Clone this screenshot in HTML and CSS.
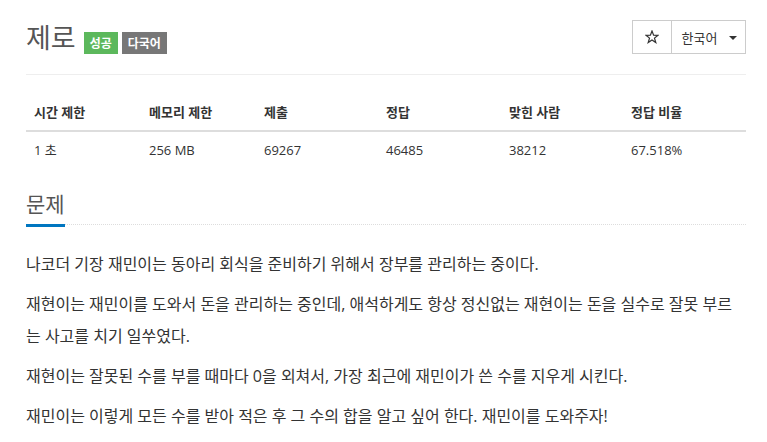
FILE: index.html
```html
<!DOCTYPE html>
<html lang="ko">
<head>
<meta charset="utf-8">
<title>제로</title>
<link rel="stylesheet" href="styles.css">
</head>
<body>
<div class="container">
  <div class="page-header">
    <h1 class="title">
      <span class="title-text">제로</span>
      <span class="label label-success">성공</span>
      <span class="label label-default">다국어</span>
    </h1>
    <div class="btn-group">
      <span class="btn btn-star"><svg width="14" height="14" viewBox="0 0 14 14"><polygon points="7,1 8.6,5.2 13,5.3 9.5,8.1 10.8,12.5 7,9.9 3.2,12.5 4.5,8.1 1,5.3 5.4,5.2" fill="none" stroke="#333" stroke-width="1.2" stroke-linejoin="miter"/></svg></span>
      <span class="btn btn-lang">한국어 <span class="caret"></span></span>
    </div>
  </div>

  <div class="info-table">
    <div class="cell head">시간 제한</div>
    <div class="cell head">메모리 제한</div>
    <div class="cell head">제출</div>
    <div class="cell head">정답</div>
    <div class="cell head">맞힌 사람</div>
    <div class="cell head">정답 비율</div>
    <div class="cell">1 초</div>
    <div class="cell">256 MB</div>
    <div class="cell">69267</div>
    <div class="cell">46485</div>
    <div class="cell">38212</div>
    <div class="cell">67.518%</div>
  </div>

  <section class="problem">
    <div class="headline">
      <h2>문제</h2>
    </div>
    <div class="problem-text">
      <p>나코더 기장 재민이는 동아리 회식을 준비하기 위해서 장부를 관리하는 중이다.</p>
      <p>재현이는 재민이를 도와서 돈을 관리하는 중인데, 애석하게도 항상 정신없는 재현이는 돈을 실수로 잘못 부르는 사고를 치기 일쑤였다.</p>
      <p>재현이는 잘못된 수를 부를 때마다 0을 외쳐서, 가장 최근에 재민이가 쓴 수를 지우게 시킨다.</p>
      <p>재민이는 이렇게 모든 수를 받아 적은 후 그 수의 합을 알고 싶어 한다. 재민이를 도와주자!</p>
    </div>
  </section>
</div>
</body>
</html>
```

FILE: styles.css
```css
html, body {
  margin: 0;
  padding: 0;
  background: #fff;
}

body {
  font-family: "Open Sans", "Noto Sans CJK KR", sans-serif;
  color: #333;
  font-size: 13px;
}

.container {
  width: 720px;
  padding-left: 26px;
}

.page-header {
  display: flex;
  justify-content: space-between;
  align-items: flex-start;
  padding-top: 20px;
  padding-bottom: 20px;
  border-bottom: 1px solid #eee;
}

.title {
  margin: 0;
  display: flex;
  align-items: center;
  height: 34px;
  font-weight: normal;
}

.title-text {
  font-size: 27px;
  line-height: 34px;
  color: #555;
  font-family: "Noto Sans CJK KR", sans-serif;
}

.label {
  display: inline-block;
  margin-top: 12px;
  height: 22px;
  line-height: 22px;
  padding: 0 6px;
  color: #fff;
  font-size: 12px;
  font-weight: bold;
  font-family: "Noto Sans CJK KR", sans-serif;
}

.label-success {
  background: #5cb85c;
  margin-left: 8px;
}

.label-default {
  background: #777;
  margin-left: 4px;
}

.btn-group {
  display: flex;
  height: 34px;
}

.btn {
  box-sizing: border-box;
  height: 34px;
  border: 1px solid #ccc;
  background: #fff;
  display: flex;
  align-items: center;
  justify-content: center;
  color: #333;
}

.btn-star {
  width: 40px;
}

.btn-lang {
  width: 75px;
  margin-left: -1px;
  font-size: 13px;
  font-family: "Noto Sans CJK KR", sans-serif;
  gap: 12px;
  padding-left: 2px;
}

.caret {
  display: inline-block;
  width: 0;
  height: 0;
  border-top: 4px solid #333;
  border-left: 4px solid transparent;
  border-right: 4px solid transparent;
  margin-top: 2px;
}

.info-table {
  display: grid;
  grid-template-columns: 115px 115px 122px 123px 122px 123px;
  margin-top: 19px;
}

.cell {
  padding: 8px;
  line-height: 20px;
  font-size: 13px;
}

.cell.head {
  font-weight: bold;
  font-size: 13px;
  border-bottom: 2px solid #ddd;
}

.problem {
  margin-top: 18px;
}

.headline {
  border-bottom: 1px dotted #ddd;
}

.headline h2 {
  display: inline-block;
  margin: 0 0 -3px 0;
  padding-bottom: 4px;
  font-size: 21px;
  line-height: 34px;
  font-weight: normal;
  color: #555;
  border-bottom: 3px solid #0076c0;
  font-family: "Noto Sans CJK KR", sans-serif;
}

.problem-text {
  margin-top: 23px;
  padding-right: 8px;
  font-size: 16px;
  line-height: 32px;
  color: #333;
  word-break: break-all;
}

.problem-text p {
  margin: 0 0 8px 0;
}
```
